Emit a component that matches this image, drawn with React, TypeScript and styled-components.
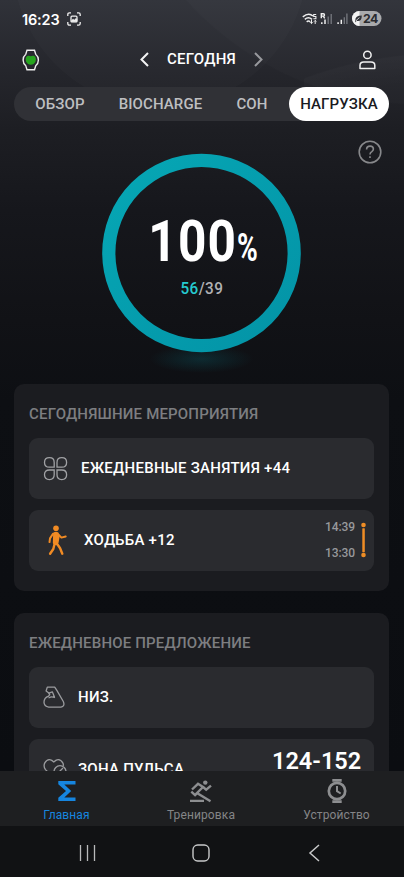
import React from "react";
import styled, { createGlobalStyle } from "styled-components";

const Global = createGlobalStyle`
  * { box-sizing: border-box; }
  body { margin: 0; background: #0c0e12; overflow: hidden; }
`;

const Screen = styled.div`
  width: 404px;
  height: 877px;
  overflow: hidden;
  display: flex;
  flex-direction: column;
  color: #fff;
  font-family: Roboto, "Noto Sans", sans-serif;
  background:
    radial-gradient(circle 315px at 420px -210px, rgba(255, 255, 255, 0.014) 99.5%, transparent 100%),
    radial-gradient(circle 387px at 136px 440px, transparent 92%, rgba(255, 255, 255, 0.02) 99.6%, transparent 100%) right top / 100px 130px no-repeat,
    radial-gradient(circle 148px at 160px -40px, rgba(255, 255, 255, 0.014) 99.5%, transparent 100%),
    linear-gradient(#303239 0, #25262c 70px, #1d1e23 130px, #16171c 210px, #111216 320px, #0d0f13 400px, #0b0d11 770px);
`;

const StatusBar = styled.div`
  height: 38px;
  padding: 0 22px;
  display: flex;
  align-items: center;
  justify-content: space-between;
`;

const StatusGroup = styled.div`
  display: flex;
  align-items: center;
  gap: 7px;
`;

const Clock = styled.span`
  font: 600 14.5px Inter, sans-serif;
  letter-spacing: -0.15px;
`;

const Header = styled.div`
  height: 49px;
  padding: 0 28px 6px 21px;
  display: grid;
  grid-template-columns: 119px 123px 1fr;
  align-items: center;
`;

const HeaderEnd = styled.div`
  display: flex;
  justify-content: flex-end;
`;

const DaySwitch = styled.div`
  display: flex;
  align-items: center;
  justify-content: space-between;
`;

const Day = styled.span`
  font-size: 15px;
  line-height: 18px;
  padding-bottom: 1px;
  font-weight: 500;
  letter-spacing: 0.25px;
`;

const Tabs = styled.div`
  height: 34px;
  flex: none;
  margin: 0 15px 0 14px;
  border-radius: 17px;
  background: #303136;
  display: grid;
  grid-template-columns: 92px 109px 74px 100px;
`;

const Tab = styled.div<{ $active?: boolean }>`
  display: flex;
  align-items: center;
  justify-content: center;
  border-radius: 17px;
  font-size: 15px;
  font-weight: 500;
  letter-spacing: 0.1px;
  color: ${(p) => (p.$active ? "#1a1b1f" : "#bebfc1")};
  background: ${(p) => (p.$active ? "#fff" : "transparent")};
`;

const Hero = styled.div`
  height: 263px;
  flex: none;
  display: grid;
  grid-template-columns: 1fr 210px 1fr;
`;

const HelpSlot = styled.div`
  grid-column: 3;
  grid-row: 1;
  padding: 19px 22px 0 0;
  display: flex;
  justify-content: flex-end;
`;

const Gauge = styled.div`
  grid-column: 2;
  grid-row: 1;
  position: relative;
  height: 263px;
`;

const GaugeRing = styled.svg`
  display: block;
`;

const GaugeLabel = styled.div`
  position: absolute;
  inset: 0;
  padding-top: 87px;
  display: flex;
  flex-direction: column;
  align-items: center;
`;

const Score = styled.div`
  display: flex;
  align-items: baseline;
  justify-content: center;
  height: 68px;
  line-height: 68px;
  font-size: 57px;
  font-weight: 700;
  letter-spacing: 1.4px;
  transform: translateX(2px) scaleX(0.87);
`;

const Percent = styled.span`
  font-size: 39px;
  display: inline-block;
  width: 25px;
  transform: scaleX(0.83);
  transform-origin: left;
`;

const Ratio = styled.div`
  margin-top: 2px;
  font-size: 17px;
  line-height: 20px;
  font-weight: 500;
  letter-spacing: 0.5px;
  color: #b0b1b4;
  transform: scaleX(0.9);
`;

const RatioValue = styled.span`
  color: #25cbd0;
`;

const Card = styled.section`
  width: 375px;
  flex: none;
  margin: 0 0 22px 14px;
  padding: 19.5px 15px 20.5px;
  border-radius: 10px;
  background: #1b1c20;
`;

const CardTitle = styled.h2`
  margin: 0 0 14px;
  height: 20px;
  line-height: 21px;
  font-size: 15px;
  font-weight: 500;
  letter-spacing: 0.18px;
  color: #7d7e81;
`;

const Rows = styled.div`
  display: flex;
  flex-direction: column;
  gap: 11px;
`;

const Row = styled.div<{ $gap: number; $inset?: number }>`
  height: 61px;
  padding: 0 7px 0 ${(p) => p.$inset ?? 14}px;
  display: flex;
  align-items: center;
  gap: ${(p) => p.$gap}px;
  border-radius: 9px;
  background: #2a2b2f;
`;

const RowLabel = styled.span`
  flex: 1;
  font-size: 15px;
  font-weight: 500;
  letter-spacing: 0.25px;
`;

const TimeSpan = styled.div`
  display: flex;
  align-items: center;
  gap: 5px;
`;

const Times = styled.div`
  display: flex;
  flex-direction: column;
  align-items: flex-end;
  gap: 11px;
  font-size: 12px;
  line-height: 15px;
  font-weight: 500;
  letter-spacing: -0.1px;
  color: #98999c;
`;

const Zone = styled.span`
  align-self: flex-start;
  padding: 6.5px 6px 0 0;
  font-size: 24px;
  line-height: 32px;
  font-weight: 600;
  transform: scaleX(0.98);
  transform-origin: right;
`;

const Content = styled.main`
  height: 650px;
  flex: none;
  overflow: hidden;
`;

const BottomNav = styled.nav`
  height: 55px;
  flex: none;
  background: #1e1f21;
  display: grid;
  grid-template-columns: 133px 136px 135px;
`;

const NavItem = styled.div<{ $active?: boolean }>`
  display: flex;
  flex-direction: column;
  align-items: center;
  padding-top: 7px;
  gap: 3px;
  font-size: 12px;
  line-height: 16px;
  letter-spacing: 0.12px;
  color: ${(p) => (p.$active ? "#1685df" : "#848587")};
`;

const SystemNav = styled.div`
  height: 51px;
  flex: none;
  padding-top: 2px;
  background: #111214;
  display: grid;
  grid-template-columns: 174px 53px 174px;
  align-items: center;
  justify-items: center;
`;

const CaptureIcon = () => (
  <svg width="14" height="14" viewBox="0 0 14 14" fill="none" stroke="#eee" strokeWidth="1.3">
    <path d="M.8 4V2.4Q.8.8 2.4.8H4M10 .8h1.6q1.6 0 1.6 1.6V4M13.2 10v1.6q0 1.6-1.6 1.6H10M4 13.2H2.4Q.8 13.2.8 11.6V10" />
    <rect x="4" y="4.2" width="6" height="5.7" rx="1" />
    <path d="m4 9 2-2 1.4 1L9 6.3l1 1V9.8H4Z" fill="#eee" strokeWidth=".4" />
  </svg>
);

const StatusIcons = () => (
  <svg width="81" height="18" viewBox="301 10 81 18" fill="none" stroke="#eee">
    <g strokeWidth="1.5">
      <path d="M302.8 16.8q5.8-4.8 10.2-.8M304.8 19.3q3.6-3 7.2 0M306.7 21.8q1.7-1.4 3.5 0" />
      <path d="M316.2 14.5h-2.5v2h2.2v2.3h-2.5" strokeWidth="1.1" />
      <path d="M311.5 20v3.5m-1.3-1.2 1.3 1.3 1.3-1.3M315.2 24v-3.5m-1.3 1.2 1.3-1.3 1.3 1.3" strokeWidth="1" />
    </g>
    <path d="M321.3 18.3v-4.6h2q1.2 0 1.2 1.2t-1.2 1.2h-2m2 0 1.4 2.2" strokeWidth="1.4" />
    <path d="M321.8 24v-1.8M325 24v-4.5" strokeWidth="1.5" />
    <path d="M328.2 24v-7.5M331.2 24V14" stroke="#777a80" strokeWidth="1.3" />
    <path d="M338.1 24v-1.8M341.3 24v-4.2" strokeWidth="1.5" />
    <path d="M344.3 24v-6.8M346.9 24V13.5" stroke="#777a80" strokeWidth="1.3" />
    <rect x="352" y="11" width="29.5" height="15" rx="7.5" fill="#a9aaac" stroke="none" />
    <path d="M359.5 11a7.5 7.5 0 0 0 0 15z" fill="#f4f4f4" stroke="none" />
    <path d="M355.3 20.2q-.2-4.8 6.5-4.8 0 6.8-5.3 5.5l-1.3 1.5z" fill="#303238" stroke="none" />
    <path d="M356 21q1.5-2.4 3.5-3.3" strokeWidth=".8" />
    <text x="363" y="23" fill="#292a2f" stroke="none" fontFamily="Inter" fontWeight="700" fontSize="12.3" letterSpacing="-.5">24</text>
  </svg>
);

const WatchStatusIcon = () => (
  <svg width="20" height="22" viewBox="0 0 20 22">
    <path d="M6 1.2h7.5l1.2 4q2.7 2.2 2.7 5.8t-2.7 5.8l-1.2 4H6l-1.2-4Q2.1 14.6 2.1 11t2.7-5.8Z" fill="none" stroke="#eee" strokeWidth="1.4" />
    <path d="M9.8 7.3Q11 6.6 12.6 6.8q2.3.4 2.3 4 0 2.6-2.3 4.2-2.8 1.4-5.6 0-2.3-1.6-2.3-4.2 0-3.6 2.3-4 1.6-.2 2.8.5Z" fill="#26a51e" />
  </svg>
);

const Chevron = ({ forward }: { forward?: boolean }) => (
  <svg width="9" height="15" viewBox="0 0 9 15" fill="none" stroke={forward ? "#98999d" : "#f4f4f4"} strokeWidth="2">
    <path d={forward ? "m1 1 6.5 6.5L1 14" : "M8 1 1.5 7.5 8 14"} />
  </svg>
);

const ProfileIcon = () => (
  <svg width="17" height="20" viewBox="0 0 17 20" fill="none" stroke="#f0f0f0" strokeWidth="1.5">
    <circle cx="8.4" cy="4.9" r="3.7" />
    <path d="M1 18.4v-3.2q0-3.3 3.8-3.3H12q3.8 0 3.8 3.3v3.2Z" strokeLinejoin="round" />
  </svg>
);

const HelpIcon = () => (
  <svg width="24" height="24" viewBox="0 0 24 24" fill="none" stroke="#87888b" strokeWidth="1.6">
    <circle cx="12" cy="12" r="10.8" />
    <path d="M8.6 9.4q0-3.3 3.5-3.3 3.3 0 3.3 3 0 1.4-1.6 2.5Q12 12.7 12 14.6" />
    <path d="M12 16.2v1.9" />
  </svg>
);

const CloverIcon = () => (
  <svg width="25" height="25" viewBox="0 0 25 25" fill="none" stroke="#a0a1a4" strokeWidth="1.3">
    <path d="M11.2 11.2H6.4q-4.9 0-4.9-4.8t4.9-4.8q4.8 0 4.8 4.8ZM14 11.2V6.4q0-4.8 4.8-4.8t4.8 4.8-4.8 4.8ZM11.2 14v4.8q0 4.8-4.8 4.8t-4.9-4.8T6.4 14ZM14 14h4.8q4.8 0 4.8 4.8t-4.8 4.8T14 18.8Z" />
  </svg>
);

const WalkIcon = () => (
  <svg width="22" height="31" viewBox="0 0 22 31" fill="none" stroke="#f18b24" strokeLinecap="round" strokeLinejoin="round">
    <circle cx="9" cy="3.2" r="2.8" fill="#f18b24" stroke="none" />
    <path d="M7 8.2q2.2-1.4 4 .2l.7 3.6-1 5.5-1.5 1.9-2.5-1.4Z" fill="#f18b24" strokeWidth="1.7" />
    <path d="m6 8.8-3 4.6-.5 3.7M11.6 9.8l2.8 2.8 4.3-1.1" strokeWidth="2" />
    <path d="M7.8 18 6.3 24l-3.2 4.7M9.5 18l3.6 5.2 2.2 5.5" strokeWidth="2.4" />
  </svg>
);

const TimelineIcon = () => (
  <svg width="7" height="36" viewBox="0 0 7 36" fill="#ef8d25">
    <circle cx="3.5" cy="3" r="2.3" />
    <rect x="2.3" y="6.3" width="2.5" height="24" rx=".5" />
    <circle cx="3.5" cy="33" r="2.3" />
  </svg>
);

const MuscleIcon = () => (
  <svg width="22" height="24" viewBox="0 0 22 24" fill="none" stroke="#9b9c9f" strokeWidth="1.3" strokeLinejoin="round" strokeLinecap="round">
    <path d="M4.3 2.1h7.4l2 3 6.6 11.4q2 4.8-2.4 5.6H5.7q-4.6-.7-4.7-4.8 0-4.5 4.6-6.1l1.1-1.6-.8-1.5-2.8-2.1Z" />
    <path d="m5.9 8.1 3.4-1.3q1.4 3.1 2.2 5.7-3-1.3-5.5.2" />
  </svg>
);

const HeartZoneIcon = () => (
  <svg width="24" height="22" viewBox="0 0 24 22" fill="none" stroke="#9b9c9f" strokeWidth="1.3">
    <path d="M10.8 20 2.5 11.6q-2.4-3.2-.7-6.7 2.8-4.7 7-2.5l2 1.6 2-1.6q4.2-2.2 7 2.5.7 1.3.6 3" />
    <circle cx="17" cy="13.7" r="6" />
    <path d="m15 15 5-5" />
  </svg>
);

const SigmaIcon = () => (
  <svg width="24" height="26" viewBox="0 0 24 26" fill="#1685df">
    <path d="M20.5 3H3.3v3.2L11 13l-7.7 6.8V23h17.2v-3.6H9.3l6.9-6.4-6.9-6.4h11.2Z" />
  </svg>
);

const TrainingIcon = () => (
  <svg width="26" height="26" viewBox="0 0 26 26" fill="none" stroke="#8d8e90" strokeWidth="2.4">
    <circle cx="17.3" cy="4.6" r="2.2" fill="#8d8e90" stroke="none" />
    <path d="m4 11.5 6-5.7 5 3.2-6 6 13.5 8.3M15 9l3.2 2.7 4.8-4M10.5 14l-3.4 3.2-3.8-3.5M2 22.9h14" />
  </svg>
);

const DeviceIcon = () => (
  <svg width="26" height="26" viewBox="0 0 26 26" fill="none" stroke="#8d8e90">
    <path d="M8.3 2.4h9.4M8.3 23.6h9.4" strokeWidth="2.6" />
    <circle cx="13" cy="13" r="8.2" strokeWidth="2.7" />
    <path d="M13 8v5.2l3.7 2.3" strokeWidth="2" />
  </svg>
);

export default function App() {
  return (
    <Screen>
      <Global />
      <StatusBar>
        <StatusGroup><Clock>16:23</Clock><CaptureIcon /></StatusGroup>
        <StatusIcons />
      </StatusBar>
      <Header>
        <WatchStatusIcon />
        <DaySwitch><Chevron /><Day>СЕГОДНЯ</Day><Chevron forward /></DaySwitch>
        <HeaderEnd><ProfileIcon /></HeaderEnd>
      </Header>
      <Tabs>
        <Tab>ОБЗОР</Tab><Tab>BIOCHARGE</Tab><Tab>СОН</Tab><Tab $active>НАГРУЗКА</Tab>
      </Tabs>
      <Content>
        <Hero>
          <Gauge>
            <GaugeRing width="210" height="263" viewBox="0 0 210 263">
              <defs>
                <linearGradient id="ring" x1="0" y1="0" x2="1" y2="1">
                  <stop stopColor="#06a7b5" /><stop offset="1" stopColor="#0393a6" />
                </linearGradient>
                <radialGradient id="glow">
                  <stop stopColor="#087380" stopOpacity=".26" /><stop offset="1" stopColor="#087380" stopOpacity="0" />
                </radialGradient>
              </defs>
              <ellipse cx="104.5" cy="238" rx="52" ry="14" fill="url(#glow)" />
              <circle cx="104.5" cy="132" r="92.7" fill="none" stroke="url(#ring)" strokeWidth="13.2" />
            </GaugeRing>
            <GaugeLabel>
              <Score>100<Percent>%</Percent></Score>
              <Ratio><RatioValue>56</RatioValue>/39</Ratio>
            </GaugeLabel>
          </Gauge>
          <HelpSlot><HelpIcon /></HelpSlot>
        </Hero>
        <Card>
          <CardTitle>СЕГОДНЯШНИЕ МЕРОПРИЯТИЯ</CardTitle>
          <Rows>
            <Row $gap={13}><CloverIcon /><RowLabel>ЕЖЕДНЕВНЫЕ ЗАНЯТИЯ +44</RowLabel></Row>
            <Row $gap={15} $inset={18}>
              <WalkIcon /><RowLabel>ХОДЬБА +12</RowLabel>
              <TimeSpan><Times><span>14:39</span><span>13:30</span></Times><TimelineIcon /></TimeSpan>
            </Row>
          </Rows>
        </Card>
        <Card>
          <CardTitle>ЕЖЕДНЕВНОЕ ПРЕДЛОЖЕНИЕ</CardTitle>
          <Rows>
            <Row $gap={13}><MuscleIcon /><RowLabel>НИЗ.</RowLabel></Row>
            <Row $gap={11}><HeartZoneIcon /><RowLabel>ЗОНА ПУЛЬСА</RowLabel><Zone>124-152</Zone></Row>
          </Rows>
        </Card>
      </Content>
      <BottomNav>
        <NavItem $active><SigmaIcon /><span>Главная</span></NavItem>
        <NavItem><TrainingIcon /><span>Тренировка</span></NavItem>
        <NavItem><DeviceIcon /><span>Устройство</span></NavItem>
      </BottomNav>
      <SystemNav>
        <svg width="17" height="18" viewBox="0 0 17 18" stroke="#b8b9ba" strokeWidth="1.3"><path d="M1.5 1v16M8.5 1v16M15.5 1v16" /></svg>
        <svg width="18" height="18" viewBox="0 0 18 18" fill="none" stroke="#c8c9ca" strokeWidth="1.4"><rect x="1" y="1" width="16" height="16" rx="4.7" /></svg>
        <svg width="12" height="18" viewBox="0 0 12 18" fill="none" stroke="#c8c9ca" strokeWidth="1.5"><path d="M11 1 2 9l9 8" /></svg>
      </SystemNav>
    </Screen>
  );
}
